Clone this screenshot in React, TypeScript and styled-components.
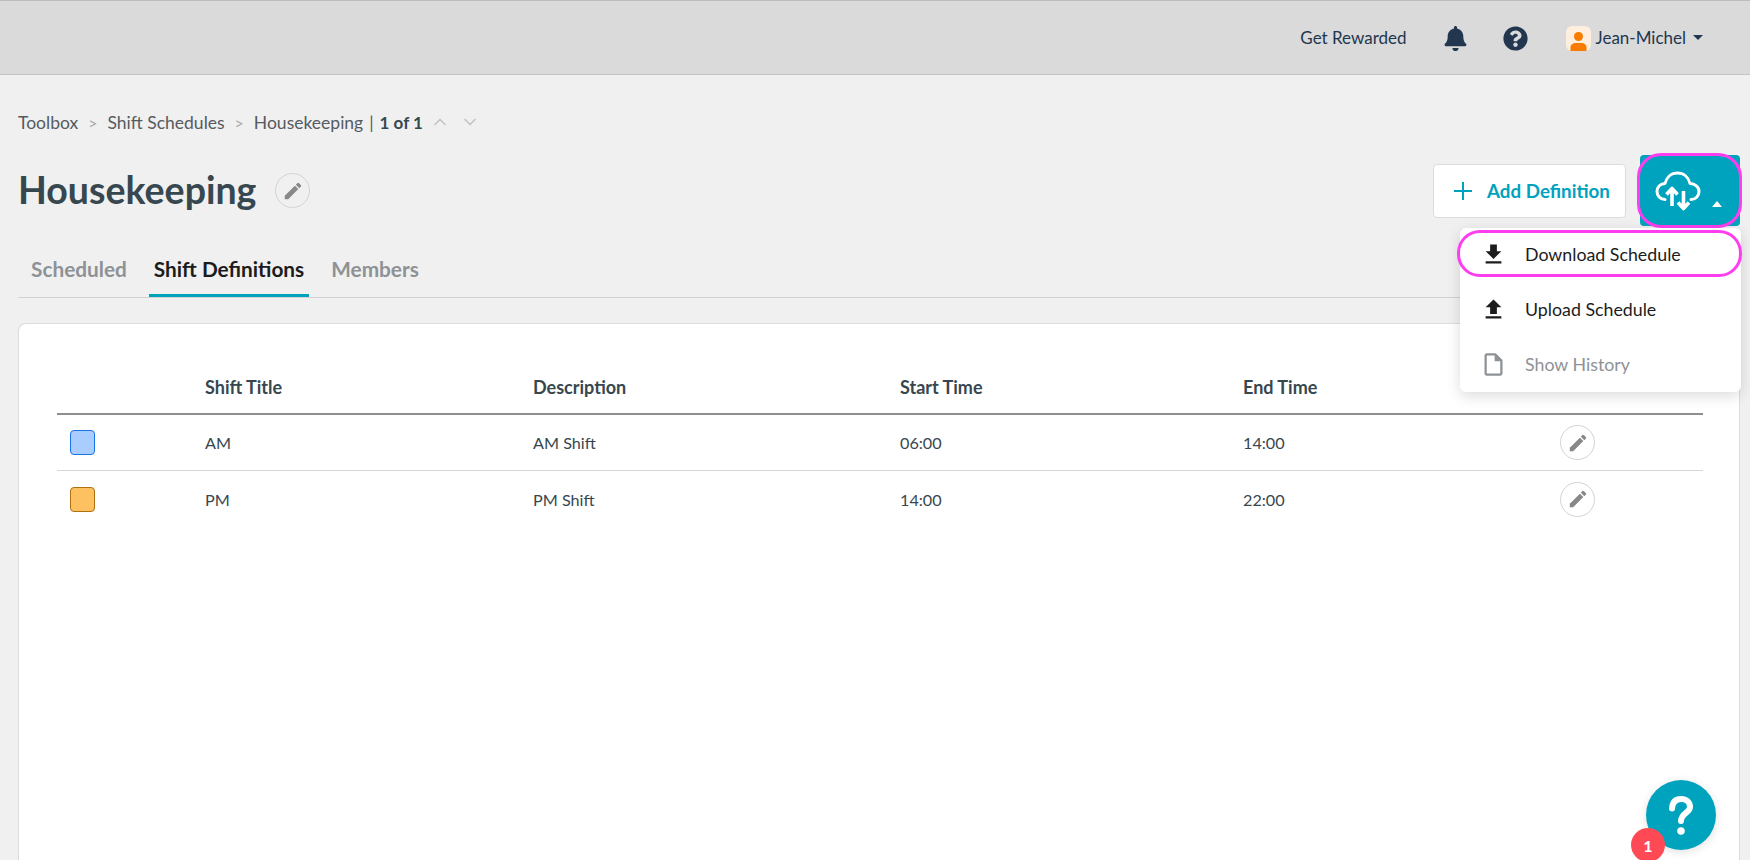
import React from "react";
import styled, { createGlobalStyle } from "styled-components";
import { FaBell, FaQuestionCircle } from "react-icons/fa";
import { FiChevronDown, FiChevronUp } from "react-icons/fi";
import { MdEdit, MdFileDownload, MdFileUpload, MdOutlineInsertDriveFile } from "react-icons/md";

const Global = createGlobalStyle`
  html, body { margin: 0; height: 100%; background: #f0f0f0; }
  body { font-family: "Lato", "Noto Sans", sans-serif; overflow: hidden; }
  * { box-sizing: border-box; }
`;

const teal = "#00a3bd";
const pink = "#ff3df0";

const Shell = styled.div`
  height: 860px;
  overflow: hidden;
  position: relative;
  display: flex;
  flex-direction: column;
`;
const TopBar = styled.header`
  height: 75px;
  flex: none;
  background: #dadada;
  border-top: 1px solid #bdbdbd;
  border-bottom: 1px solid #c4c4c4;
  display: flex;
  align-items: center;
  justify-content: flex-end;
  padding: 0 47px 0 0;
  color: #22374f;
`;
const NavLink = styled.span`
  font-size: 17px;
  margin-right: 36px;
`;
const NavIcon = styled.span`
  display: flex;
  width: 25px;
  height: 25px;
  align-items: center;
  justify-content: center;
  margin-right: 35px;
  font-size: 25px;
  margin-top: 2px;
`;
const Avatar = styled.svg`
  width: 25px;
  height: 25px;
  margin-left: 3px;
  margin-top: 2px;
`;
const UserName = styled.span`
  font-size: 17px;
  margin-left: 5px;
`;
const Caret = styled.span`
  width: 0;
  height: 0;
  margin-left: 7px;
  border-left: 5px solid transparent;
  border-right: 5px solid transparent;
  border-top: 5px solid #22374f;
`;
const Main = styled.main`
  flex: 1;
  min-height: 0;
  padding: 35px 10px 0 18px;
  display: flex;
  flex-direction: column;
`;
const Crumbs = styled.nav`
  height: 24px;
  display: flex;
  align-items: center;
  font-size: 17.5px;
  color: #555b60;
`;
const Sep = styled.span`
  color: #a8a8a8;
  margin: 0 10px;
  font-size: 16px;
`;
const Count = styled.b`
  color: #37474f;
  font-size: 17px;
  font-weight: 700;
  margin-left: 6px;
`;
const Pipe = styled.span`
  margin-left: 6px;
  color: #555b60;
`;
const Chevron = styled.span`
  display: flex;
  color: #c4c4c4;
  font-size: 20px;
  margin-left: 7px;
  & + & {
    margin-left: 10px;
  }
`;
const TitleRow = styled.div`
  height: 71px;
  margin-top: 21px;
  display: flex;
  align-items: center;
`;
const Title = styled.h1`
  margin: -2px 0 0;
  font-size: 37.5px;
  font-weight: 700;
  color: #37474f;
`;
const RoundEdit = styled.button<{ $bg?: string }>`
  width: 35px;
  height: 35px;
  border-radius: 50%;
  border: 1px solid #d3d3d3;
  background: ${(p) => p.$bg || "transparent"};
  color: #888;
  display: flex;
  align-items: center;
  justify-content: center;
  font-size: 22px;
  padding: 0;
`;
const TitleEdit = styled(RoundEdit)`
  margin-left: 19px;
`;
const Spacer = styled.div`
  flex: 1;
`;
const AddButton = styled.button`
  width: 193px;
  height: 54px;
  background: #fff;
  border: 1px solid #dcdcdc;
  border-radius: 4px;
  color: ${teal};
  font: 700 18.8px "Lato", sans-serif;
  display: flex;
  align-items: center;
  padding: 0 0 0 20px;
  gap: 15px;
  margin-right: 14px;
`;
const UploadWrap = styled.div`
  position: relative;
`;
const UploadButton = styled.button`
  position: relative;
  width: 100px;
  height: 71px;
  background: ${teal};
  border: none;
  border-radius: 4px;
  display: flex;
  padding: 16px 0 0 15px;
  &::after {
    content: "";
    position: absolute;
    inset: -2px -2px -2px -3px;
    border: 3px solid ${pink};
    border-radius: 24px;
  }
`;
const UpCaret = styled.span`
  width: 0;
  height: 0;
  margin: 30px 0 0 11px;
  border-left: 5.5px solid transparent;
  border-right: 5.5px solid transparent;
  border-bottom: 6px solid #fff;
`;
const Menu = styled.div`
  position: absolute;
  z-index: 3;
  top: 73px;
  right: -1px;
  width: 281px;
  height: 164px;
  background: #fff;
  border-radius: 6px;
  box-shadow: 0 4px 14px rgba(0, 0, 0, 0.14);
  display: flex;
  flex-direction: column;
`;
const MenuItem = styled.div<{ $muted?: boolean; $first?: boolean; $ring?: boolean }>`
  position: relative;
  height: ${(p) => (p.$first ? "52px" : "55px")};
  margin-bottom: ${(p) => (p.$first ? "1.5px" : "0")};
  flex: none;
  display: flex;
  align-items: center;
  padding-left: 20px;
  gap: 18px;
  font-size: 17.8px;
  color: ${(p) => (p.$muted ? "#8e9296" : "#1c1c1c")};
  ${(p) =>
    p.$ring &&
    `&::after {
      content: "";
      position: absolute;
      inset: 2px -1px 3px -3px;
      border: 3px solid ${pink};
      border-radius: 23px;
    }`}
`;
const Tabs = styled.div`
  height: 72px;
  flex: none;
  border-bottom: 1px solid #d2d2d2;
  display: flex;
  align-items: flex-end;
  padding-left: 8px;
  gap: 17px;
`;
const Tab = styled.div<{ $active?: boolean }>`
  height: 71px;
  padding: 30px 5px 0;
  font-size: 20.8px;
  font-weight: 700;
  color: ${(p) => (p.$active ? "#1c1c1c" : "#8e9296")};
  border-bottom: 3px solid ${(p) => (p.$active ? teal : "transparent")};
`;
const Card = styled.section`
  flex: 1;
  margin-top: 25px;
  background: #fff;
  border: 1px solid #dcdcdc;
  border-bottom: none;
  border-radius: 8px 8px 0 0;
  padding: 37px 36px 0 38px;
  min-height: 0;
`;
const Row = styled.div<{ $head?: boolean }>`
  display: grid;
  grid-template-columns: 148px 328px 367px 343px 317px 1fr;
  align-items: center;
  color: #37474f;
  font-size: ${(p) => (p.$head ? "18px" : "16.2px")};
  font-weight: ${(p) => (p.$head ? 700 : 400)};
  height: ${(p) => (p.$head ? "54px" : "56px")};
  border-bottom: ${(p) => (p.$head ? "2px solid #8f8f8f" : "1px solid #d6d6d6")};
  &:last-child {
    border-bottom: none;
  }
`;
const Swatch = styled.span<{ $fill: string; $line: string }>`
  display: block;
  width: 25px;
  height: 25px;
  margin-left: 13px;
  border-radius: 4px;
  background: ${(p) => p.$fill};
  border: 1px solid ${(p) => p.$line};
`;
const Help = styled.div`
  position: absolute;
  left: 1646px;
  top: 780px;
  width: 70px;
  height: 70px;
  border-radius: 50%;
  background: ${teal};
  display: flex;
  align-items: center;
  justify-content: center;
  box-shadow: 0 2px 10px rgba(0, 0, 0, 0.12);
`;
const Badge = styled.div`
  position: absolute;
  left: -15px;
  top: 48px;
  width: 34px;
  height: 34px;
  border-radius: 50%;
  background: #ff4a55;
  color: #fff;
  font-size: 16px;
  font-weight: 700;
  display: flex;
  align-items: center;
  justify-content: center;
`;

const CloudIcon = () => (
  <svg width="46" height="40" viewBox="0 0 46 40" fill="none" stroke="#fff" strokeWidth="3" strokeLinecap="round" strokeLinejoin="round">
    <path d="M10 28.5C5 28.5 2 24.5 2 20.5C2 16 5.5 12.5 10 12.5C11.5 6 16.500 2 22.5 2C28.5 2 33.5 6 35 12.5C40 12.5 44 16 44 20.5C44 25 40.5 28.5 36 28.5" />
    <path d="M17 35V18M11.5 23.5L17 17.5L22.5 23.5" strokeWidth="3.6" strokeLinecap="butt" />
    <path d="M28.5 20V37M23 31.5L28.5 37.5L34 31.5" strokeWidth="3.6" strokeLinecap="butt" />
  </svg>
);
const PlusIcon = () => (
  <svg width="18" height="18" viewBox="0 0 18 18" stroke={teal} strokeWidth="2">
    <path d="M9 0V18M0 9H18" />
  </svg>
);
const QuestionGlyph = () => (
  <svg width="24" height="39" viewBox="0 0 24 39" fill="none" stroke="#fff" strokeWidth="6" strokeLinecap="round">
    <path d="M3 12.5C3.500 6 7 3 12 3C17.500 3 21 6.500 21 11C21 17 12 17 12 25" />
    <circle cx="12" cy="35" r="3.800" fill="#fff" stroke="none" />
  </svg>
);

const rows = [
  { title: "AM", desc: "AM Shift", start: "06:00", end: "14:00", fill: "#a9cdff", line: "#1a73e8" },
  { title: "PM", desc: "PM Shift", start: "14:00", end: "22:00", fill: "#fdc162", line: "#b06f10" },
];

export default function App() {
  return (
    <Shell>
      <Global />
      <TopBar>
        <NavLink>Get Rewarded</NavLink>
        <NavIcon><FaBell /></NavIcon>
        <NavIcon><FaQuestionCircle /></NavIcon>
        <Avatar viewBox="0 0 25 25">
          <rect width="25" height="25" rx="6" fill="#fdeedd" />
          <circle cx="12.5" cy="10.5" r="4.5" fill="#f97b00" />
          <path d="M4.5 25v-3.500c0-3 2.500-4.500 5-4.500h6c2.500 0 5 1.500 5 4.500V25z" fill="#f97b00" />
        </Avatar>
        <UserName>Jean-Michel</UserName>
        <Caret />
      </TopBar>
      <Main>
        <Crumbs>
          Toolbox<Sep>&gt;</Sep>Shift Schedules<Sep>&gt;</Sep>Housekeeping<Pipe>|</Pipe>
          <Count>1 of 1</Count>
          <Chevron><FiChevronUp /></Chevron>
          <Chevron><FiChevronDown /></Chevron>
        </Crumbs>
        <TitleRow>
          <Title>Housekeeping</Title>
          <TitleEdit><MdEdit /></TitleEdit>
          <Spacer />
          <AddButton><PlusIcon />Add Definition</AddButton>
          <UploadWrap>
            <UploadButton><CloudIcon /><UpCaret /></UploadButton>
            <Menu>
              <MenuItem $first $ring><MdFileDownload size={27} />Download Schedule</MenuItem>
              <MenuItem><MdFileUpload size={27} />Upload Schedule</MenuItem>
              <MenuItem $muted><MdOutlineInsertDriveFile size={27} />Show History</MenuItem>
            </Menu>
          </UploadWrap>
        </TitleRow>
        <Tabs>
          <Tab>Scheduled</Tab>
          <Tab $active>Shift Definitions</Tab>
          <Tab>Members</Tab>
        </Tabs>
        <Card>
          <Row $head>
            <span />
            <span>Shift Title</span>
            <span>Description</span>
            <span>Start Time</span>
            <span>End Time</span>
            <span />
          </Row>
          {rows.map((r) => (
            <Row key={r.title}>
              <Swatch $fill={r.fill} $line={r.line} />
              <span>{r.title}</span>
              <span>{r.desc}</span>
              <span>{r.start}</span>
              <span>{r.end}</span>
              <RoundEdit $bg="#fff"><MdEdit /></RoundEdit>
            </Row>
          ))}
        </Card>
      </Main>
      <Help>
        <QuestionGlyph />
        <Badge>1</Badge>
      </Help>
    </Shell>
  );
}
